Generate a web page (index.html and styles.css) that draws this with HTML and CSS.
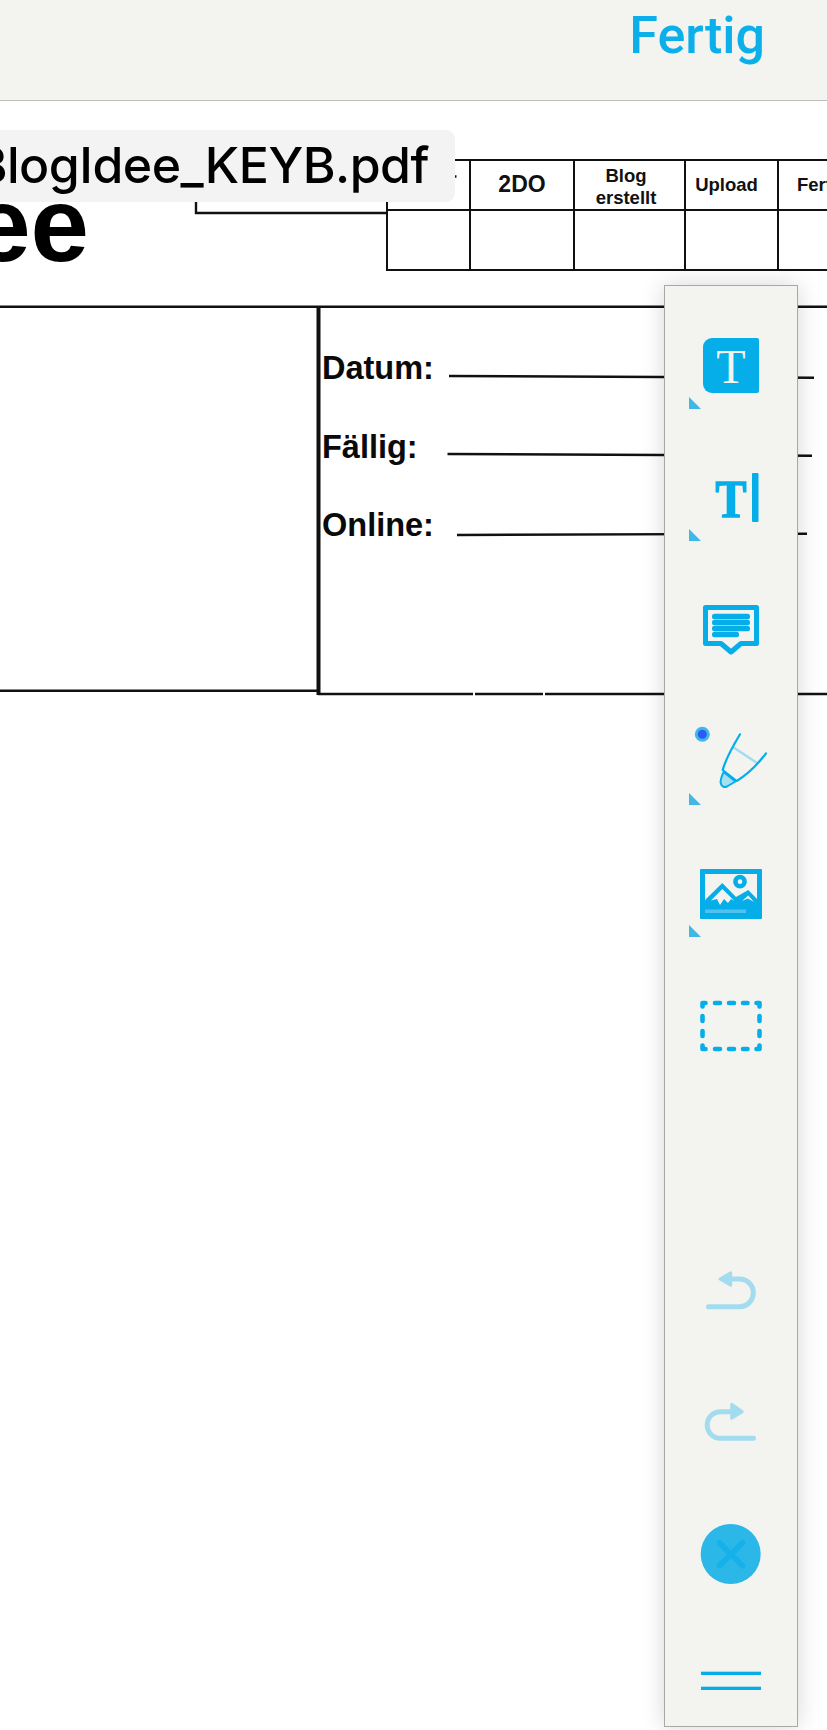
FILE: index.html
```html
<!DOCTYPE html>
<html lang="de">
  <head>
    <meta charset="utf-8" />
    <title>BlogIdee_KEYB.pdf</title>
    <link rel="stylesheet" href="styles.css" />
  </head>
  <body>
    <header class="topbar">
      <a class="done" href="#">Fertig</a>
    </header>

    <main class="viewer">
      <!-- the pdf page: rules are one svg, labels sit on top of it -->
      <div class="page">
        <svg class="rules" width="827" height="600" viewBox="0 0 827 600">
          <path d="M196 101V112H387" />
          <path d="M0 205.7H827" />
          <path d="M0 589.7H318M318 593H473M475 593H543M545 593H827" />
          <path class="thick" d="M318.5 205V594" />
          <path d="M449 275L814 276.7" />
          <path d="M447.5 353L812 354.7" />
          <path d="M457 434L807 432.7" />
          <path d="M455 75.5h1.5" />
        </svg>

        <div class="title">ee</div>

        <div class="tracker">
          <div class="cell"></div>
          <div class="cell cell-big">2DO</div>
          <div class="cell cell-two">Blog<br />erstellt</div>
          <div class="cell cell-upload">Upload</div>
          <div class="cell cell-cut">Fertig</div>
          <div class="cell cell-low"></div>
          <div class="cell cell-low"></div>
          <div class="cell cell-low"></div>
          <div class="cell cell-low"></div>
          <div class="cell cell-low"></div>
        </div>

        <div class="label label-datum">Datum:</div>
        <div class="label label-faellig">Fällig:</div>
        <div class="label label-online">Online:</div>
      </div>

      <div class="filename">BlogIdee_KEYB.pdf</div>

      <aside class="toolbar">
        <div class="tool">
          <svg viewBox="0 0 133 132" width="133" height="132">
            <path class="blue" d="M47 18H92a2 2 0 0 1 2 2V71a2 2 0 0 1-2 2H47a9 9 0 0 1-9-9V27a9 9 0 0 1 9-9Z" />
            <text class="glyph-light" x="66" y="63">T</text>
            <path class="corner" d="M24 77L36 89H24Z" />
          </svg>
        </div>
        <div class="tool">
          <svg viewBox="0 0 133 132" width="133" height="132">
            <text class="glyph-bold" x="66" y="64.500" textLength="31" lengthAdjust="spacingAndGlyphs">T</text>
            <rect class="blue" x="87" y="21" width="6.500" height="49" rx="1" />
            <path class="corner" d="M24 77L36 89H24Z" />
          </svg>
        </div>
        <div class="tool">
          <svg viewBox="0 0 133 132" width="133" height="132">
            <path class="line" stroke-width="5" d="M40.500 23.500H91.500V59.500H76L66 68L56 59.500H40.500Z" />
            <rect class="blue" x="47" y="29.800" width="38" height="5.500" rx="2.500" />
            <rect class="blue" x="47" y="35.800" width="38" height="5.500" rx="2.500" />
            <rect class="blue" x="47" y="41.800" width="38" height="5.500" rx="2.500" />
            <rect class="blue" x="47" y="47.800" width="27" height="5.500" rx="2.500" />
          </svg>
        </div>
        <div class="tool">
          <svg viewBox="0 0 133 132" width="133" height="132">
            <circle class="corner" cx="37.300" cy="18.300" r="7.500" />
            <circle class="dot" cx="37.300" cy="18.300" r="4.500" />
            <path class="pale-line" stroke-width="2.500" d="M69 31.700L91.700 46.700" />
            <path class="line" stroke-width="2.200" d="M75 18.300C68 30 61 42 57.700 54L71.700 65C83 58 93 48 101 37.300" />
            <path class="nib" d="M58.500 56C57 60 55 64 55.700 67C56.500 71.500 60 71.500 62 70.500L70.500 65.500Z" />
            <path class="corner" d="M24 77L36 89H24Z" />
          </svg>
        </div>
        <div class="tool">
          <svg viewBox="0 0 133 132" width="133" height="132">
            <path class="blue" fill-rule="evenodd" d="M36 21H96a1 1 0 0 1 1 1V70a1 1 0 0 1-1 1H36a1 1 0 0 1-1-1V22a1 1 0 0 1 1-1ZM40 26V66H92V26Z" />
            <circle class="line" stroke-width="4.500" cx="75" cy="33.700" r="4.600" />
            <path class="blue" d="M40 52L57.300 35L71 49L83.300 42L92 51V66H40Z" />
            <path class="snow" d="M57.300 41L46 52.500L52 51L55 57L59 51L63 55L66 51L69.500 53Z" />
            <path class="snow" d="M83.200 47.500L77 53L83 50.500L89 54Z" />
            <rect class="band" x="40" y="61.500" width="41" height="3.500" />
            <path class="corner" d="M24 77L36 89H24Z" />
          </svg>
        </div>
        <div class="tool">
          <svg viewBox="0 0 133 132" width="133" height="132">
            <path class="line dashes" d="M37.500 26.500V23H40.500M50 23H55M64 23H69M78 23H82.500M91.500 23H94.500V26.500M37.500 36V41M37.500 51V56M94.500 36V41M94.500 51V56M37.500 65.500V69H40.500M50 69H55M64 69H69M78 69H82.500M91.500 69H94.500V65.500" />
          </svg>
        </div>

        <div class="spacer"></div>

        <div class="tool">
          <svg viewBox="0 0 133 132" width="133" height="132">
            <path class="pale-line" stroke-width="5" d="M67 55H74.500A13.850 13.850 0 0 1 74.500 82.700H43.500" />
            <path class="pale" d="M55 55L65.700 48.700V61.300Z" />
          </svg>
        </div>
        <div class="tool">
          <svg viewBox="0 0 133 132" width="133" height="132">
            <path class="pale-line" stroke-width="5" d="M66 55.700H55.500A13.300 13.300 0 0 0 55.500 82.300H88.500" />
            <path class="pale" d="M77.300 55.700L66.700 48.300V62.300Z" />
          </svg>
        </div>
        <div class="tool">
          <svg viewBox="0 0 133 132" width="133" height="132">
            <circle class="disc" cx="65.700" cy="66" r="30" />
            <path class="line line-x" stroke-width="5.500" d="M54.500 54.700L77.500 77.700M77.500 54.700L54.500 77.700" />
          </svg>
        </div>
        <div class="tool tool-menu">
          <svg viewBox="0 0 133 106" width="133" height="106">
            <rect class="blue" x="36" y="51.700" width="60" height="3.300" />
            <rect class="blue" x="36" y="66.700" width="60" height="3.300" />
          </svg>
        </div>
      </aside>
    </main>
  </body>
</html>
```

FILE: styles.css
```css
html,
body {
  margin: 0;
  height: 100%;
  overflow: hidden;
  background-color: #fff;
}

body {
  display: flex;
  flex-direction: column;
  font-family: "Liberation Sans", Arial, sans-serif;
}

.topbar {
  display: flex;
  justify-content: flex-end;
  box-sizing: border-box;
  height: 101px;
  padding-right: 62px;
  background-color: #f3f3ef;
  border-bottom: 1px solid #bdbdbd;
}

.done {
  font-family: "Roboto", sans-serif;
  font-size: 52px;
  font-weight: 500;
  line-height: 72px;
  color: #0bb0ea;
  text-decoration: none;
}

.viewer {
  position: relative;
  flex: 1;
  overflow: hidden;
}

/* pdf page, everything in here is placed as on the sheet */
.page {
  position: absolute;
  inset: 0;
}

.rules {
  position: absolute;
  left: 0;
  top: 0;
}

.rules path {
  fill: none;
  stroke: #111;
  stroke-width: 2.400;
}

.rules .thick {
  stroke-width: 4;
}

.title {
  position: absolute;
  right: 738px;
  top: 104px;
  font-size: 105px;
  font-weight: 700;
  line-height: 40px;
  color: #000;
}

.tracker {
  position: absolute;
  left: 386px;
  top: 58px;
  width: 500px;
  display: grid;
  grid-template-columns: 83px 104px 111px 93px 109px;
  grid-template-rows: 50px 58px;
  border-top: 2px solid #111;
  border-bottom: 2px solid #111;
  border-left: 2px solid #111;
}

.cell {
  display: flex;
  align-items: center;
  justify-content: center;
  box-sizing: border-box;
  padding-bottom: 2px;
  border-right: 2px solid #111;
  border-bottom: 2px solid #111;
  font-size: 18.500px;
  font-weight: 700;
  line-height: 23px;
  text-align: center;
  color: #111;
}

.cell-big {
  font-size: 23px;
}

.cell-two {
  padding-top: 4px;
  padding-right: 7px;
  padding-bottom: 0;
  line-height: 22px;
}

.cell-upload {
  padding-right: 10px;
}

.cell-cut {
  justify-content: flex-start;
  padding-left: 18px;
}

.cell-low {
  padding: 0;
  border-bottom: 0;
}

.label {
  position: absolute;
  left: 322px;
  font-size: 32.500px;
  font-weight: 700;
  line-height: 36px;
  color: #0a0a0a;
}

.label-datum {
  top: 249px;
}

.label-faellig {
  top: 328px;
}

.label-online {
  top: 406px;
}

/* floating file name pill, runs off the left edge */
.filename {
  position: absolute;
  right: 372px;
  top: 29px;
  height: 72px;
  padding: 0 26px 0 40px;
  border-radius: 9px;
  background-color: #f3f3f3;
  font-family: "Inter", sans-serif;
  font-size: 50px;
  font-weight: 500;
  letter-spacing: -0.500px;
  line-height: 70px;
  white-space: nowrap;
  color: #000;
}

.toolbar {
  position: absolute;
  left: 664px;
  top: 184px;
  bottom: 3px;
  width: 134px;
  box-sizing: border-box;
  display: flex;
  flex-direction: column;
  padding-top: 34px;
  background-color: #f3f3ef;
  border: 1px solid #a8a8a8;
  box-shadow: 0 0 22px rgba(0, 0, 0, 0.16);
}

.tool {
  flex: none;
  height: 132px;
}

.tool svg {
  display: block;
}

.tool-menu {
  height: 106px;
}

.spacer {
  flex: 1;
}

.blue {
  fill: #05aee9;
}

.line {
  fill: none;
  stroke: #05aee9;
  stroke-linecap: round;
  stroke-linejoin: round;
}

.line-x {
  stroke: #14b1ea;
}

.dashes {
  stroke-width: 4.600;
}

.corner {
  fill: #3fb8e8;
}

.dot {
  fill: #2a5cf5;
}

.pale {
  fill: #a3dcef;
  stroke: #a3dcef;
  stroke-width: 3;
  stroke-linejoin: round;
}

.pale-line {
  fill: none;
  stroke: #a3dcef;
  stroke-linecap: round;
}

.nib {
  fill: #a8dff0;
  stroke: #05aee9;
  stroke-width: 2;
  stroke-linejoin: round;
}

.snow {
  fill: #f3f3ef;
}

.band {
  fill: #4fc3ee;
}

.disc {
  fill: #2bb7e8;
}

.glyph-light,
.glyph-bold {
  font-family: "Liberation Serif", serif;
  text-anchor: middle;
}

.glyph-light {
  font-size: 48px;
  fill: #f3f3ef;
}

.glyph-bold {
  font-size: 53px;
  font-weight: 700;
  fill: #05aee9;
  stroke: #05aee9;
  stroke-width: 1.500;
}
```
